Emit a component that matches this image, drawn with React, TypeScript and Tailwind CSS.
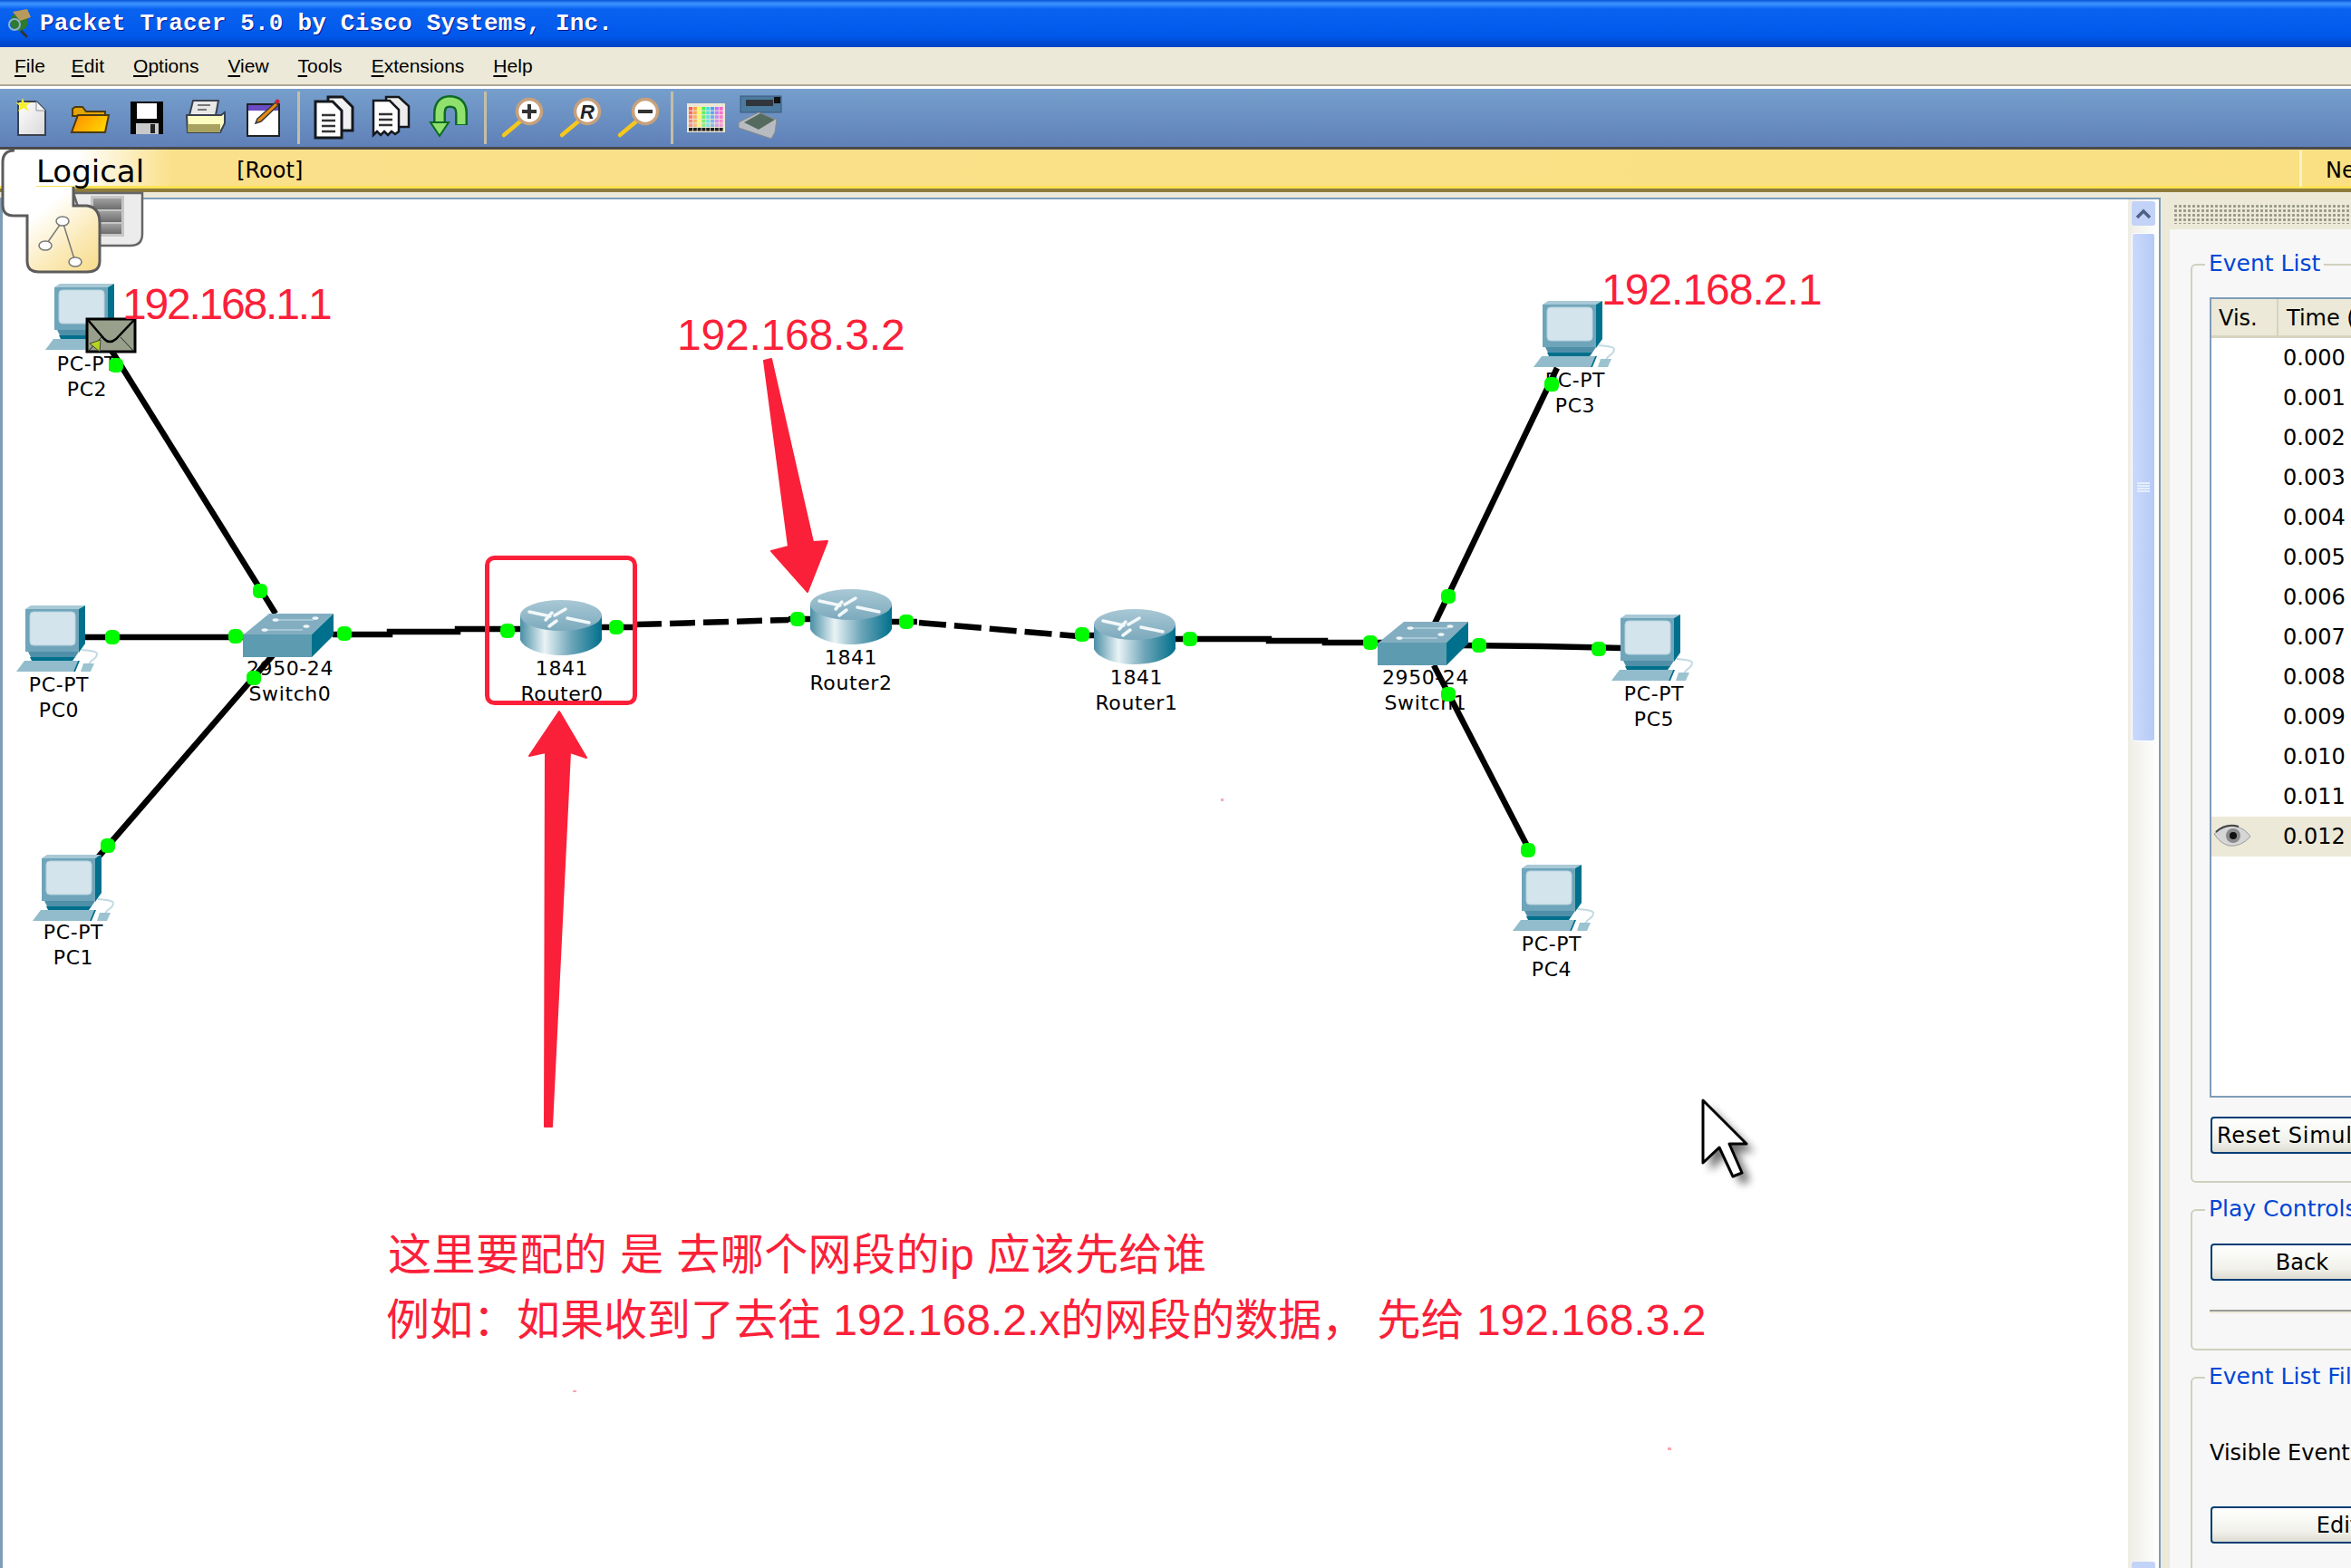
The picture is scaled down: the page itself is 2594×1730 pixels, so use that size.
import React from 'react';

const sans = '[font-family:"DejaVu_Sans",sans-serif]';

// toolbar icons, each drawn in a 64x60 slot
const Slot = ({ children }: { children: React.ReactNode }) => (
  <svg width="64" height="60" viewBox="0 0 64 60" className="shrink-0">{children}</svg>
);

const NewIcon = () => (
  <Slot>
    <defs>
      <linearGradient id="pageFill" x1="0" y1="0" x2="1" y2="1">
        <stop offset="0" stopColor="#ffffff" />
        <stop offset="1" stopColor="#d8d8d8" />
      </linearGradient>
    </defs>
    <path d="M18 12 H38 L48 22 V49 H18 Z" fill="url(#pageFill)" stroke="#3a4150" strokeWidth="2" />
    <path d="M38 12 V22 H48" fill="#f4f4f4" stroke="#8a8f98" strokeWidth="1" />
    <path d="M23 8 L25 14 L32 13 L27 17 L30 23 L24 19 L18 23 L20 17 L15 13 L21 14 Z" fill="#f6f02c" />
  </Slot>
);

const FolderIcon = () => (
  <Slot>
    <defs>
      <linearGradient id="folderFill" x1="0" y1="0" x2="1" y2="0.4">
        <stop offset="0" stopColor="#ff8a00" />
        <stop offset="1" stopColor="#ffd000" />
      </linearGradient>
    </defs>
    <path d="M14 20 L17 18 H25 L29 23 H50 V28 H14 Z" fill="#e2a400" stroke="#4d3a10" strokeWidth="2" />
    <path d="M20 27 H54 L50 46 H13 Z" fill="url(#folderFill)" stroke="#4d3a10" strokeWidth="2" />
  </Slot>
);

const SaveIcon = () => (
  <Slot>
    <rect x="14" y="12" width="36" height="36" fill="#050505" />
    <rect x="21" y="14" width="22" height="17" fill="#ffffff" />
    <rect x="20" y="36" width="25" height="12" fill="#c9c9c9" />
    <rect x="36" y="37" width="5" height="10" fill="#222222" />
  </Slot>
);

const PrintIcon = () => (
  <Slot>
    <path d="M19 11 H47 L44 27 H15 Z" fill="#e8e8e8" stroke="#3a4150" strokeWidth="2" />
    <rect x="24" y="15" width="14" height="2" fill="#777" />
    <rect x="24" y="20" width="10" height="2" fill="#777" />
    <path d="M12 27 H50 L54 24 V36 L49 46 H13 Z" fill="#fdfcc0" stroke="#3a4150" strokeWidth="2" />
    <rect x="13" y="37" width="36" height="9" fill="#a8a260" />
  </Slot>
);

const NoteIcon = () => (
  <Slot>
    <rect x="15" y="15" width="35" height="35" fill="#ffffff" stroke="#222" strokeWidth="2" />
    <rect x="16" y="16" width="33" height="6" fill="#6a4bc4" />
    <path d="M26 31 L46 13 L49 16 L30 34 L24 36 Z" fill="#e58a14" stroke="#3a3a3a" strokeWidth="1.5" />
    <circle cx="48" cy="12" r="2.5" fill="#c8283c" />
  </Slot>
);

const CopyIcon = () => (
  <Slot>
    <path d="M26 7 H42 L53 18 V44 H26 Z" fill="#f1f1f1" stroke="#15181e" strokeWidth="3" />
    <path d="M12 12 H31 L41 22 V52 H12 Z" fill="#ffffff" stroke="#15181e" strokeWidth="3" />
    <path d="M19 27 H34 M19 33 H34 M19 39 H34 M19 45 H34" stroke="#333" strokeWidth="2.5" />
  </Slot>
);

const PasteIcon = () => (
  <Slot>
    <path d="M26 7 H40 L51 17 V40 H26 Z" fill="#ececec" stroke="#15181e" strokeWidth="2.5" />
    <path d="M12 11 H30 L40 21 V45 L36 48 L32 45 L28 49 L24 45 L20 49 L16 45 L12 49 Z" fill="#ffffff" stroke="#15181e" strokeWidth="2.5" />
    <path d="M18 26 H33 M18 32 H33 M18 38 H33" stroke="#333" strokeWidth="2.5" />
  </Slot>
);

const UndoIcon = () => (
  <Slot>
    <path d="M45 38 V25 Q45 12 32 12 Q21 12 21 26 V36" fill="none" stroke="#0e6a24" strokeWidth="14" />
    <path d="M45 37 V25 Q45 12 32 12 Q21 12 21 26 V37" fill="none" stroke="#8fe06c" strokeWidth="9" />
    <path d="M11 35 H31 L21 50 Z" fill="#8fe06c" stroke="#0e6a24" strokeWidth="2" />
  </Slot>
);

const Magnifier = ({ children }: { children: React.ReactNode }) => (
  <Slot>
    <path d="M13 49 L31 34" stroke="#f6c71d" strokeWidth="4.5" strokeLinecap="round" />
    <circle cx="41" cy="23" r="13.5" fill="#ffffff" stroke="#c7a17c" strokeWidth="3.5" />
    {children}
  </Slot>
);

const paletteColors = ['#ff5a5a', '#ffa040', '#ffff50', '#50f050', '#40e0e0', '#4aa0ff', '#c070ff', '#ff60d0'];

const PaletteIcon = () => (
  <Slot>
    <rect x="11" y="14" width="42" height="32" fill="#ece7d5" />
    {[0, 1, 2, 3, 4, 5].map((r) =>
      paletteColors.map((c, i) => (
        <rect key={`${r}-${i}`} x={13 + i * 4.8} y={18 + r * 4.6} width="4" height="3.6" fill={r === 5 ? '#222' : c} opacity={r === 5 ? 1 : 1 - r * 0.1} />
      ))
    )}
  </Slot>
);

const DeviceIcon = () => (
  <Slot>
    <rect x="12" y="6" width="45" height="18" fill="#4d7ba0" stroke="#38597a" />
    <rect x="18" y="10" width="30" height="7" fill="#30363c" />
    <rect x="49" y="7" width="7" height="7" fill="#111" />
    <path d="M10 35 L32 24 L52 32 L50 46 L46 53 L10 41 Z" fill="#b8bcc0" stroke="#858a90" />
    <path d="M16 35 L34 25 L50 32 L32 43 Z" fill="#566b60" />
  </Slot>
);

const Sep = ({ className }: { className: string }) => <div className={`h-[58px] w-[3px] shrink-0 bg-[#c4bea6] ${className}`} />;

// diagram shapes
const PcShape = ({ x, y }: { x: number; y: number }) => (
  <g transform={`translate(${x} ${y})`}>
    <path d="M80 65 C83 58 89 60 89 53 C88 50 80 50 72 49" fill="none" stroke="#c3dae3" strokeWidth="2" />
    <polygon points="10,4 16,0 76,0 69,4" fill="#a9c9d6" />
    <rect x="10" y="4" width="59" height="47" fill="#6fa5ba" />
    <polygon points="69,4 76,0 76,42 69,52" fill="#00708c" />
    <rect x="15" y="7" width="50" height="37" rx="4" fill="#d3e4ed" stroke="#b5d0dc" />
    <polygon points="13,51 69,51 65,57 16,57" fill="#4f8fa8" />
    <polygon points="15,57 65,57 62,61 17,61" fill="#00708c" />
    <polygon points="9,61 68,61 63,73 0,73" fill="#92bccb" />
    <polygon points="68,61 70,61 65,73 63,73" fill="#00708c" />
    <polygon points="74,64 86,64 82,73 71,73" fill="#9cc3d0" />
  </g>
);

const SwitchShape = ({ x, y }: { x: number; y: number }) => (
  <g transform={`translate(${x} ${y})`}>
    <polygon points="1,23 29,0 100,0 76,23" fill="#83aec1" />
    <polygon points="76,23 100,0 100,24 76,48" fill="#00708c" />
    <rect x="0" y="23" width="76" height="25" fill="#5d9bb0" />
    <path d="M36 7 H78 M24 18 H66" stroke="#a7c8d5" strokeWidth="2" />
    <ellipse cx="36" cy="7" rx="3.5" ry="1.8" fill="#eef6f8" />
    <ellipse cx="80" cy="5" rx="3.5" ry="1.8" fill="#eef6f8" />
    <ellipse cx="24" cy="18" rx="3.5" ry="1.8" fill="#eef6f8" />
    <ellipse cx="70" cy="14" rx="3.5" ry="1.8" fill="#eef6f8" />
  </g>
);

const RouterShape = ({ x, y }: { x: number; y: number }) => (
  <g transform={`translate(${x} ${y})`}>
    <path d="M0 17 V44 C4 54 24 61 45 61 C66 61 86 54 90 44 V17 Z" fill="url(#routerSide)" />
    <ellipse cx="45" cy="17" rx="45" ry="17" fill="url(#routerTop)" />
    <path d="M10 13 L33 18 M28 22 L35 14 M50 10 L38 17 M52 20 L76 25" stroke="#f2f8fa" strokeWidth="3.5" strokeLinecap="round" />
    <path d="M32 29 L40 23" stroke="#f2f8fa" strokeWidth="3.5" strokeLinecap="round" />
  </g>
);

const ports: [number, number][] = [
  [128, 403], [287, 652], [124, 703], [260, 702], [380, 699], [560, 696], [680, 692], [880, 683], [1000, 686],
  [1194, 700], [1313, 705], [1512, 709], [1632, 712], [1598, 658], [1598, 766], [1764, 716], [1712, 424],
  [1686, 938], [119, 933], [280, 748],
];

const labels = [
  { a: 'PC-PT', b: 'PC2', pos: 'left-[96px] top-[170px]' },
  { a: 'PC-PT', b: 'PC0', pos: 'left-[65px] top-[524px]' },
  { a: 'PC-PT', b: 'PC1', pos: 'left-[81px] top-[797px]' },
  { a: '2950-24', b: 'Switch0', pos: 'left-[320px] top-[506px]' },
  { a: '1841', b: 'Router0', pos: 'left-[620px] top-[506px]' },
  { a: '1841', b: 'Router2', pos: 'left-[939px] top-[494px]' },
  { a: '1841', b: 'Router1', pos: 'left-[1254px] top-[516px]' },
  { a: '2950-24', b: 'Switch1', pos: 'left-[1573px] top-[516px]' },
  { a: 'PC-PT', b: 'PC5', pos: 'left-[1825px] top-[534px]' },
  { a: 'PC-PT', b: 'PC3', pos: 'left-[1738px] top-[188px]' },
  { a: 'PC-PT', b: 'PC4', pos: 'left-[1712px] top-[810px]' },
];

const rows = ['0.000', '0.001', '0.002', '0.003', '0.004', '0.005', '0.006', '0.007', '0.008', '0.009', '0.010', '0.011', '0.012'];

const Diagram = () => (
  <svg viewBox="0 218 2348 1512" className="absolute left-0 top-0 h-[1512px] w-[2348px]">
    <defs>
      <linearGradient id="routerSide" x1="0" y1="0" x2="1" y2="0">
        <stop offset="0" stopColor="#4a8fa6" />
        <stop offset="0.3" stopColor="#e9f3f6" />
        <stop offset="0.62" stopColor="#6fa6b9" />
        <stop offset="1" stopColor="#00708c" />
      </linearGradient>
      <linearGradient id="routerTop" x1="0" y1="0" x2="0" y2="1">
        <stop offset="0" stopColor="#a9c8d5" />
        <stop offset="1" stopColor="#7caabd" />
      </linearGradient>
      <filter id="cursorBlur" x="-50%" y="-50%" width="200%" height="200%">
        <feGaussianBlur stdDeviation="5" />
      </filter>
    </defs>

    {/* cables */}
    <g fill="none" stroke="#000" strokeWidth="6.5">
      <path d="M122 385 L304 677" />
      <path d="M90 703 H270" />
      <path d="M301 723 L108 946" />
      <path d="M367 700 H430 V697 H505 V694 H580" />
      <path d="M664 692 H698" />
      <path d="M702 689 L870 684" strokeDasharray="28 9" />
      <path d="M870 683 H900" />
      <path d="M980 686 H1012" />
      <path d="M1014 687 L1190 702" strokeDasharray="30 9" />
      <path d="M1190 701 H1220" />
      <path d="M1290 705 H1400 V707 H1462 V709 H1530" />
      <path d="M1610 712 L1700 713 L1790 715" />
      <path d="M1582 690 L1718 406" />
      <path d="M1582 734 L1690 943" />
    </g>

    <PcShape x={50} y={313} />
    <PcShape x={18} y={668} />
    <PcShape x={36} y={943} />
    <PcShape x={1692} y={332} />
    <PcShape x={1669} y={954} />
    <PcShape x={1778} y={678} />
    <SwitchShape x={268} y={677} />
    <SwitchShape x={1520} y={686} />
    <RouterShape x={574} y={662} />
    <RouterShape x={894} y={650} />
    <RouterShape x={1207} y={672} />

    {/* envelope on PC2 */}
    <rect x="96" y="352" width="53" height="36" fill="#98a08c" stroke="#000" strokeWidth="3" />
    <path d="M97 353 L115 374 Q121 380 128 374 L148 353" fill="none" stroke="#000" strokeWidth="2.5" />
    <path d="M97 388 L112 372 M148 388 L133 372" stroke="#222" strokeWidth="1" />
    <polygon points="99,379 111,375 110,388" fill="#b5d41c" stroke="#444" strokeWidth="1" />

    {ports.map(([x, y]) => (
      <rect key={`${x}-${y}`} x={x - 8} y={y - 8} width="16" height="16" rx="6" fill="#00fa00" />
    ))}

    {/* annotations */}
    <rect x="537.5" y="615.5" width="163" height="160" rx="8" fill="none" stroke="#fb2039" strokeWidth="5" />
    <polygon points="617,785 647,836 629,830 609,1243 601,1243 602,830 584,834" fill="#fb2039" stroke="#fb2039" strokeWidth="2" strokeLinejoin="round" />
    <polygon points="891,653 851,608 870,603 843,398 851,396 897,598 913,597" fill="#fb2039" stroke="#fb2039" strokeWidth="2" strokeLinejoin="round" />
    <rect x="1347" y="881" width="3" height="3" fill="#fb2039" opacity="0.4" />
    <rect x="632" y="1534" width="4" height="2" fill="#fb2039" opacity="0.4" />
    <rect x="1840" y="1597" width="4" height="3" fill="#fb2039" opacity="0.4" />

    {/* mouse cursor */}
    <path d="M1887 1222 V1292 L1906 1274 L1921 1307 L1931 1303 L1917 1271 H1936 Z" fill="#000" opacity="0.55" filter="url(#cursorBlur)" />
    <path d="M1879 1214 V1283 L1897 1266 L1912 1298 L1922 1294 L1908 1262 H1927 Z" fill="#fff" stroke="#000" strokeWidth="3" strokeLinejoin="round" />
  </svg>
);

const Group = ({ title, className, children }: { title: string; className: string; children: React.ReactNode }) => (
  <div className={`relative w-[400px] rounded-l-md border-2 border-[#d0d0bf] pl-[19px] ${className}`}>
    <span className="absolute -top-[17px] left-[14px] bg-[#f7f7f7] px-[4px] text-[25px] leading-[30px] text-[#0046d5]">{title}</span>
    {children}
  </div>
);

const XpButton = ({ label, className }: { label: string; className: string }) => (
  <div className={`ml-[1px] flex h-[41px] items-center rounded-[4px] border-2 border-[#003c74] bg-[linear-gradient(180deg,#ffffff,#f1f1ea_70%,#dcdcd2)] text-[24px] text-black ${className}`}>
    {label}
  </div>
);

const Eye = () => (
  <svg width="42" height="30" viewBox="0 0 42 30" className="ml-[2px]">
    <path d="M1 12 Q14 1 26 4 Q36 7 41 15 Q30 27 17 25 Q7 22 1 12 Z" fill="#d6d6d6" stroke="#9a9a9a" />
    <circle cx="22" cy="14" r="8" fill="#8a8a8a" />
    <circle cx="22" cy="14" r="4" fill="#111" />
    <path d="M3 10 Q14 0 28 4" fill="none" stroke="#444" strokeWidth="2" />
  </svg>
);

export default function App() {
  return (
    <div className={`flex h-[1730px] w-[2594px] flex-col overflow-hidden bg-white ${sans}`}>
      {/* title bar */}
      <div className="flex h-[52px] shrink-0 items-center bg-[linear-gradient(180deg,#0a57d8_0,#3d95ff_4px,#0a63f0_10px,#0058ea_40px,#0042c4_52px)]">
        <svg width="32" height="34" viewBox="0 0 32 34" className="ml-[6px]">
          <circle cx="15" cy="15" r="10" fill="#2e7a2e" />
          <path d="M8 4 L24 1 L28 10 L16 14 Z" fill="#b89a5a" />
          <path d="M17 25 L24 32" stroke="#333" strokeWidth="3" />
          <circle cx="10" cy="18" r="6" fill="none" stroke="#8fb0d0" strokeWidth="2" />
        </svg>
        <span className='ml-[6px] whitespace-pre text-[26px] font-bold tracking-[0.2px] text-white [font-family:"Liberation_Mono",monospace] [text-shadow:1px_1px_0_#0f1089]'>
          Packet Tracer 5.0 by Cisco Systems, Inc.
        </span>
      </div>

      {/* menu */}
      <div className='flex h-[46px] shrink-0 gap-[32px] border-b-[3px] border-white bg-[#ece9d8] pl-[16px] text-[21px] text-black shadow-[inset_0_-2px_0_#aca899] [font-family:"Liberation_Sans",sans-serif]'>
        {[['F', 'ile'], ['E', 'dit'], ['O', 'ptions'], ['V', 'iew'], ['T', 'ools'], ['E', 'xtensions'], ['H', 'elp']].map(([u, rest]) => (
          <span key={u + rest} className="pt-[5px] first:-mr-[3px]">
            <span className="underline underline-offset-[3px]">{u}</span>
            {rest}
          </span>
        ))}
      </div>

      {/* toolbar */}
      <div className="flex h-[67px] shrink-0 items-center border-b-[3px] border-[#4a4a4a] bg-[linear-gradient(180deg,#769fcc,#5f80b8)] pl-[2px]">
        <NewIcon />
        <FolderIcon />
        <SaveIcon />
        <PrintIcon />
        <NoteIcon />
        <Sep className="ml-[6px] mr-[5px]" />
        <CopyIcon />
        <PasteIcon />
        <UndoIcon />
        <Sep className="ml-[6px] mr-[6px]" />
        <Magnifier>
          <path d="M41 15 V31 M33 23 H49" stroke="#333" strokeWidth="4" />
        </Magnifier>
        <Magnifier>
          <text x="41" y="31" textAnchor="middle" fontSize="22" fontWeight="700" fontStyle="italic" fill="#222" fontFamily="Liberation Sans">R</text>
        </Magnifier>
        <Magnifier>
          <path d="M33 23 H49" stroke="#333" strokeWidth="4" />
        </Magnifier>
        <Sep className="ml-[5px] mr-[4px]" />
        <PaletteIcon />
        <div className="-ml-[6px]">
          <DeviceIcon />
        </div>
      </div>

      {/* yellow workspace bar */}
      <div className="relative z-20 flex h-[47px] shrink-0 border-b-[4px] border-[#8d7b3c] bg-[linear-gradient(90deg,#ffffff_0,#ffffff_85px,#fae08a_190px,#fae083_100%)] shadow-[inset_0_-3px_0_#fde355]">
        <svg width="160" height="140" viewBox="0 165 160 140" className="absolute left-0 top-0 overflow-visible">
          <defs>
            <linearGradient id="tabFill" gradientUnits="userSpaceOnUse" x1="55" y1="225" x2="112" y2="295">
              <stop offset="0" stopColor="#ffffff" />
              <stop offset="0.55" stopColor="#fbeab8" />
              <stop offset="1" stopColor="#f8dc8c" />
            </linearGradient>
            <linearGradient id="backFill" x1="0" y1="0" x2="0" y2="1">
              <stop offset="0" stopColor="#a0a0a0" />
              <stop offset="1" stopColor="#6e6e6e" />
            </linearGradient>
          </defs>
          <path d="M81 213 H157 V258 Q157 271 144 271 H100 Z" fill="#ececec" stroke="#666" strokeWidth="2.5" />
          <rect x="100" y="216" width="37" height="45" fill="#c6c6c6" />
          <rect x="103" y="219" width="31" height="12" fill="url(#backFill)" />
          <rect x="103" y="233" width="31" height="12" fill="url(#backFill)" />
          <rect x="103" y="247" width="31" height="11" fill="url(#backFill)" />
          <path d="M81 206 V227 H96 Q110 229 110 246 V288 Q110 300 96 300 H43 Q30 300 30 288 V238 H15 Q3 238 3 226 V179 Q3 166 16 166 H40 V206 Z" fill="url(#tabFill)" />
          <path d="M81 206 V227 H96 Q110 229 110 246 V288 Q110 300 96 300 H43 Q30 300 30 288 V238 H15 Q3 238 3 226 V179 Q3 166 16 166" fill="none" stroke="#5c5c5c" strokeWidth="3" />
          <path d="M69 244 L50 271 M69 244 L83 289" stroke="#777" strokeWidth="1.5" />
          <ellipse cx="69" cy="244" rx="7" ry="5" fill="#fff" stroke="#777" strokeWidth="1.5" />
          <ellipse cx="50" cy="271" rx="7" ry="5" fill="#fff" stroke="#777" strokeWidth="1.5" />
          <ellipse cx="83" cy="289" rx="7" ry="5" fill="#fff" stroke="#777" strokeWidth="1.5" />
        </svg>
        <span className="relative ml-[40px] mt-[1px] text-[34px] leading-[46px] text-black">Logical</span>
        <span className="relative ml-[102px] text-[24px] leading-[46px] text-black">[Root]</span>
        <div className="absolute left-[2537px] top-[1px] h-[40px] w-[3px] bg-[#fdf3c8]" />
        <span className="absolute left-[2566px] top-0 text-[24px] leading-[46px] text-black">New</span>
      </div>

      <div className="h-[6px] shrink-0 bg-[#ece9d8]" />

      {/* main */}
      <div className="flex min-h-0 flex-1">
        <div className="relative w-[2348px] shrink-0 bg-white shadow-[inset_3px_2px_0_#7f9db9]">
          {labels.map((l) => (
            <div key={l.b} className={`absolute -translate-x-1/2 whitespace-nowrap text-center text-[22px] leading-[28px] tracking-[0.6px] text-black ${l.pos}`}>
              <div>{l.a}</div>
              <div>{l.b}</div>
            </div>
          ))}
          <Diagram />
          <div className='absolute left-[135px] top-[90px] text-[48px] leading-[56px] tracking-[-2.2px] text-[#fb2039] [font-family:"Liberation_Sans",sans-serif]'>192.168.1.1</div>
          <div className='absolute left-[747px] top-[124px] text-[48px] leading-[56px] tracking-[-0.2px] text-[#fb2039] [font-family:"Liberation_Sans",sans-serif]'>192.168.3.2</div>
          <div className='absolute left-[1767px] top-[74px] text-[48px] leading-[56px] tracking-[-1px] text-[#fb2039] [font-family:"Liberation_Sans",sans-serif]'>192.168.2.1</div>
          <div className='absolute left-[426px] top-[1131px] whitespace-pre text-[48px] leading-[72px] text-[#fb2039] [font-family:"Liberation_Sans","Noto_Sans_CJK_SC",sans-serif]'>
            <div className="ml-[2px] tracking-[0.45px]">这里要配的 是 去哪个网段的ip 应该先给谁</div>
            <div>例如：如果收到了去往 192.168.2.x的网段的数据， 先给 192.168.3.2</div>
          </div>
        </div>

        {/* vertical scrollbar */}
        <div className="flex w-[34px] shrink-0 flex-col border-t-2 border-[#7f9db9] bg-[linear-gradient(90deg,#eeede5,#ffffff)] px-[4px] pt-[2px]">
          <div className="flex h-[27px] items-center justify-center rounded-[3px] bg-[#c3d3f7]">
            <svg width="18" height="12" viewBox="0 0 18 12">
              <path d="M2 10 L9 3 L16 10" fill="none" stroke="#4d6185" strokeWidth="3.5" />
            </svg>
          </div>
          <div className="mt-[8px] flex h-[561px] items-center justify-center rounded-[3px] border border-white bg-[linear-gradient(90deg,#cbdafb,#b5caf6)]">
            <div className="flex w-[14px] flex-col gap-[1px]">
              <div className="h-[2px] bg-[#e6eefe]" />
              <div className="h-[2px] bg-[#e6eefe]" />
              <div className="h-[2px] bg-[#e6eefe]" />
              <div className="h-[2px] bg-[#e6eefe]" />
            </div>
          </div>
          <div className="flex-1" />
          <div className="h-[7px] rounded-t-[3px] bg-[#c3d3f7]" />
        </div>
        <div className="w-[2px] shrink-0 bg-[#7f9db9]" />

        {/* simulation panel */}
        <div className="flex min-w-0 flex-1 flex-col overflow-hidden bg-[#ece9d8]">
          <div className="ml-[14px] mt-[7px] h-[22px] shrink-0 bg-[radial-gradient(circle,#98988a_1.3px,transparent_1.8px)] bg-[length:5px_5px]" />
          <div className="ml-[10px] mt-[6px] flex-1 bg-[#f7f7f7] pl-[23px] pt-[38px]">
            <Group title="Event List" className="h-[1014px] pt-[35px]">
              <div className="h-[883px] w-[300px] border-2 border-[#7f9db9] bg-white">
                <div className="flex h-[43px] border-b-[3px] border-[#d6d3c0] bg-[#ece9d8] text-[24px] leading-[42px] text-black">
                  <span className="w-[74px] border-r-2 border-[#d6d3c0] pl-[8px]">Vis.</span>
                  <span className="whitespace-nowrap pl-[9px]">Time (sec)</span>
                </div>
                {rows.map((r) => (
                  <div key={r} className={`flex h-[44px] items-center text-[24px] text-black ${r === '0.012' ? 'bg-[#ece9d8]' : ''}`}>
                    <div className="flex w-[79px] items-center">{r === '0.012' && <Eye />}</div>
                    {r}
                  </div>
                ))}
              </div>
              <XpButton label="Reset Simulation" className="mt-[21px] w-[300px] justify-start pl-[5px] tracking-[0.7px]" />
            </Group>
            <Group title="Play Controls" className="mt-[29px] h-[156px] pt-[36px]">
              <XpButton label="Back" className="w-[202px] justify-center" />
              <div className="mt-[32px] h-[4px] w-[300px] border-t-2 border-[#9a9a9a] bg-[#ece9d8]" />
            </Group>
            <Group title="Event List Filters" className="mt-[29px] h-[300px] pt-[67px]">
              <div className="whitespace-nowrap text-[24px] leading-[30px] text-black">Visible Events</div>
              <XpButton label="Edit" className="mt-[44px] w-[280px] justify-center" />
            </Group>
          </div>
        </div>
      </div>
    </div>
  );
}
